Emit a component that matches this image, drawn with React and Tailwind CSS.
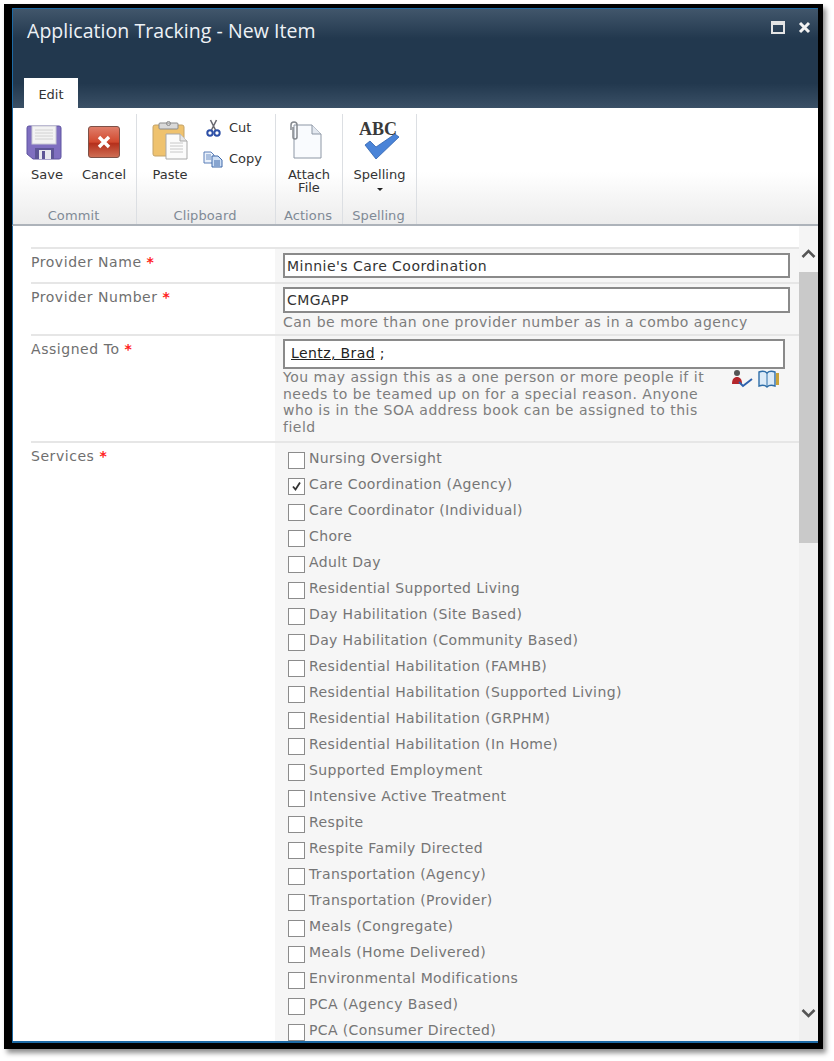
const services = [
  "Nursing Oversight",
  "Care Coordination (Agency)",
  "Care Coordinator (Individual)",
  "Chore",
  "Adult Day",
  "Residential Supported Living",
  "Day Habilitation (Site Based)",
  "Day Habilitation (Community Based)",
  "Residential Habilitation (FAMHB)",
  "Residential Habilitation (Supported Living)",
  "Residential Habilitation (GRPHM)",
  "Residential Habilitation (In Home)",
  "Supported Employment",
  "Intensive Active Treatment",
  "Respite",
  "Respite Family Directed",
  "Transportation (Agency)",
  "Transportation (Provider)",
  "Meals (Congregate)",
  "Meals (Home Delivered)",
  "Environmental Modifications",
  "PCA (Agency Based)",
  "PCA (Consumer Directed)",
];

function SaveIcon() {
  return (
    <svg width="36" height="36" viewBox="0 0 36 36" className="mr-[6px]">
      <path d="M1 3a2 2 0 0 1 2-2h30a2 2 0 0 1 2 2v29a2 2 0 0 1-2 2H7l-6-5z" fill="#7f6fc0" stroke="#5f54a0" />
      <rect x="6" y="1" width="24" height="18" fill="#f3f3f3" stroke="#c9c9d4" />
      <path d="M9 5h18M9 8h18M9 11h18M9 14h18" stroke="#d2d2d2" />
      <rect x="9" y="23" width="19" height="11" fill="#5d5596" />
      <rect x="13" y="25" width="12" height="9" fill="#e8e8ee" />
      <rect x="16" y="26" width="3" height="8" fill="#5d5596" />
    </svg>
  );
}

function CancelIcon() {
  return (
    <svg width="32" height="32" viewBox="0 0 32 32" className="mb-[3px]">
      <defs>
        <linearGradient id="cancelFill" x1="0" y1="0" x2="0" y2="1">
          <stop offset="0" stopColor="#e0806c" />
          <stop offset="0.5" stopColor="#d2492f" />
          <stop offset="0.55" stopColor="#b5301c" />
          <stop offset="1" stopColor="#cf6f55" />
        </linearGradient>
      </defs>
      <rect x="0.5" y="0.5" width="31" height="31" rx="2.5" fill="url(#cancelFill)" stroke="#7d5147" />
      <path d="M11 11l10 10M21 11L11 21" stroke="#fff" strokeWidth="3.4" />
    </svg>
  );
}

function PasteIcon() {
  return (
    <svg width="36" height="40" viewBox="0 0 36 40">
      <rect x="1" y="4" width="31" height="31" rx="2" fill="#efc26e" stroke="#c4a368" />
      <rect x="7" y="2" width="19" height="6" rx="1" fill="#d9d9d9" stroke="#8b8b8b" />
      <circle cx="16.5" cy="2.5" r="2" fill="none" stroke="#8b8b8b" />
      <path d="M14 13h14l7 7v18H14z" fill="#fbfbfb" stroke="#a9a9a9" />
      <path d="M28 13v7h7" fill="#e6e6e6" stroke="#a9a9a9" />
      <path d="M18 22h13M18 25h13M18 28h13M18 31h13" stroke="#c8c8c8" />
    </svg>
  );
}

function CutIcon() {
  return (
    <svg width="15" height="18" viewBox="0 0 15 18">
      <path d="M10.5 1L5.5 11M4.5 1l5 10" stroke="#6a6a72" strokeWidth="1.6" />
      <circle cx="4" cy="14" r="2.7" fill="none" stroke="#2d4fa6" strokeWidth="2" />
      <circle cx="11" cy="14" r="2.7" fill="none" stroke="#2d4fa6" strokeWidth="2" />
    </svg>
  );
}

function CopyIcon() {
  return (
    <svg width="20" height="17" viewBox="0 0 20 17">
      <path d="M1 1h7l3 3v8H1z" fill="#eaf1fb" stroke="#5a7fb8" />
      <path d="M3 4h5M3 6h5M3 8h5" stroke="#6c8fc4" />
      <path d="M9 5h6l4 4v7H9z" fill="#cfe0f6" stroke="#3f68a8" />
      <path d="M11 10h6M11 12h6M11 14h6" stroke="#3f68a8" />
    </svg>
  );
}

function AttachIcon() {
  return (
    <svg width="34" height="38" viewBox="0 0 34 38" className="mb-[2px] mr-[8px]">
      <path d="M6 4h18l9 9v24H6z" fill="#f9fbfe" stroke="#8d97a5" />
      <path d="M24 4v9h9" fill="#e3e8f0" stroke="#8d97a5" />
      <path d="M3 9V4a3 3 0 0 1 6 0v12a2 2 0 0 1-4 0V6" fill="none" stroke="#85898f" strokeWidth="1.5" />
    </svg>
  );
}

function SpellIcon() {
  return (
    <svg width="42" height="42" viewBox="0 -4 42 42" className="mb-[2px]">
      <text x="0" y="14" fontFamily="Liberation Serif" fontWeight="700" fontSize="18" fill="#3a3a3a">ABC</text>
      <path d="M6 24l5-4 6 6L36 13l4 3-23 22z" fill="#4a84d8" stroke="#2f62ad" strokeWidth="0.8" />
    </svg>
  );
}

function Group({ label, width, children }) {
  return (
    <div className={`${width} flex flex-col border-r border-[#dcdfe3]`}>
      <div className="flex flex-1">{children}</div>
      <div className="h-[17px] pr-[2px] text-center text-[13px] leading-[17px] tracking-[0.1px] text-[#7f8a96]">{label}</div>
    </div>
  );
}

function BigButton({ icon, label, width, arrow }) {
  return (
    <div className={`${width} flex flex-col items-center`}>
      <div className="flex h-[47px] items-end justify-center">{icon}</div>
      <div className="mt-[7px] text-center text-[13px] leading-[13px] text-[#333]">
        {label}
        {arrow && <div className="mx-auto mt-[7px] h-0 w-0 border-x-[3px] border-t-[3px] border-x-transparent border-t-[#222]" />}
      </div>
    </div>
  );
}

function Row({ label, children, className }) {
  return (
    <div className={`flex border-t-2 border-[#e6e6e6] ${className}`}>
      <div className="w-[244px] shrink-0 pt-[4px] text-[14px] leading-[18px] tracking-[0.55px] text-[#6f6f6f]">
        {label} <span className="font-bold text-[#ff2020]">*</span>
      </div>
      <div className="flex-1 bg-[#f6f6f6]">{children}</div>
    </div>
  );
}

export default function App() {
  return (
    <div className="h-[1061px] w-[834px] overflow-hidden bg-white pl-[4px] pt-[4px] font-['DejaVu_Sans',sans-serif]">
      <div className="flex h-[1045px] w-[819px] flex-col border-x-[8px] border-b-[6px] border-t-[4px] border-black border-r-[5px] shadow-[3px_4px_5px_rgba(0,0,0,0.45)]">
        <div className="flex h-[100px] shrink-0 flex-col border-l border-t border-[#1d6aa5] bg-[linear-gradient(#41566b,#22384e_30%,#22384e_75%,#3a5066)]">
          <div className="flex h-[69px] justify-between pl-[14px] pr-[7px] pt-[8px]">
            <div className="font-['Open_Sans',sans-serif] text-[19.5px] leading-[28px] tracking-[0.05px] text-[#eef2f6]">
              Application Tracking - New Item
            </div>
            <div className="flex gap-[13px] pt-[3px]">
              <div className="mt-[1px] h-[13px] w-[14px] border-2 border-t-[4px] border-[#e4e4e4]" />
              <svg width="13" height="13" viewBox="0 0 13 13" className="mt-[1px]">
                <path d="M2 2l9 9M11 2l-9 9" stroke="#f2f2f2" strokeWidth="3" />
              </svg>
            </div>
          </div>
          <div className="mt-auto flex h-[30px] pl-[11px]">
            <div className="w-[54px] bg-white pt-[8px] text-center text-[13px] leading-[17px] text-[#333]">Edit</div>
          </div>
        </div>

        <div className="flex h-[118px] shrink-0 border-b-2 border-l border-[#adb3ba] border-l-[#1d6aa5] bg-[linear-gradient(#ffffff_55%,#ececec)] pt-[6px]">
          <Group label="Commit" width="w-[124px]">
            <BigButton width="w-[68px]" label="Save" icon={<SaveIcon />} />
            <BigButton width="w-[46px]" label="Cancel" icon={<CancelIcon />} />
          </Group>
          <Group label="Clipboard" width="w-[139px]">
            <BigButton width="w-[66px]" label="Paste" icon={<PasteIcon />} />
            <div className="flex flex-col gap-[11px] pt-[4px] text-[13px] leading-[20px] text-[#333]">
              <div className="flex items-center gap-[8px] pl-[3px]"><CutIcon /> Cut</div>
              <div className="flex items-center gap-[6px]"><CopyIcon /> Copy</div>
            </div>
          </Group>
          <Group label="Actions" width="w-[67px]">
            <BigButton width="w-full" label={<>Attach<br />File</>} icon={<AttachIcon />} />
          </Group>
          <Group label="Spelling" width="w-[74px]">
            <BigButton width="w-full" label="Spelling" icon={<SpellIcon />} arrow />
          </Group>
        </div>

        <div className="flex min-h-0 flex-1 overflow-hidden border-b-2 border-l border-[#1d6aa5] bg-white">
          <div className="min-w-0 flex-1 pl-[18px] pt-[21px]">
            <Row label="Provider Name" className="h-[35px]">
              <div className="px-[8px] pt-[4px]">
                <div className="h-[25px] w-[507px] border-2 border-[#8a8a8a] bg-white pl-[2px] text-[14px] leading-[22px] tracking-[0.46px] text-[#333]">
                  Minnie's Care Coordination
                </div>
              </div>
            </Row>
            <Row label="Provider Number" className="h-[52px]">
              <div className="px-[8px] pt-[3px]">
                <div className="h-[26px] w-[507px] border-2 border-[#8a8a8a] bg-white pl-[2px] text-[14px] leading-[22px] tracking-[0.46px] text-[#333]">
                  CMGAPP
                </div>
                <div className="text-[14px] leading-[19px] tracking-[0.5px] text-[#7d7d7d]">
                  Can be more than one provider number as in a combo agency
                </div>
              </div>
            </Row>
            <Row label="Assigned To" className="h-[107px]">
              <div className="px-[8px] pt-[3px]">
                <div className="h-[30px] w-[502px] border-2 border-[#8a8a8a] bg-white pl-[6px] text-[14px] leading-[24px] tracking-[0.4px] text-[#222]">
                  <span className="underline">Lentz, Brad</span> ;
                </div>
                <div className="flex">
                  <div className="w-[447px] text-[14px] leading-[16.7px] tracking-[0.5px] text-[#7d7d7d]">
                    You may assign this as a one person or more people if it needs to be teamed up on for a special reason. Anyone who is in the SOA address book can be assigned to this field
                  </div>
                  <svg width="50" height="20" viewBox="0 0 50 20" className="ml-[1px]">
                    <circle cx="6" cy="4" r="3" fill="#555" />
                    <path d="M1 15c0-5 2-7 5-7s5 2 5 7z" fill="#b5262c" />
                    <path d="M8 13l4 4 9-7" fill="none" stroke="#2f62ad" strokeWidth="2" />
                    <path d="M28 3c3-1 6-1 8 1 2-2 5-2 8-1v14c-3-1-6-1-8 1-2-2-5-2-8-1z" fill="#dcebf8" stroke="#2f6ea8" strokeWidth="1.4" />
                    <path d="M36 4v14" stroke="#2f6ea8" />
                    <rect x="45" y="4" width="3" height="12" fill="#c9a33a" />
                  </svg>
                </div>
              </div>
            </Row>
            <Row label="Services" className="h-[700px]">
              <div className="pl-[13px] pt-[3px]">
                {services.map((name, i) => (
                  <div key={name} className="flex h-[26px] items-center gap-[4px] text-[14px] tracking-[0.38px] text-[#757575]">
                    <div className="mt-[2px] flex h-[17px] w-[17px] items-center justify-center border border-[#8c8c8c] bg-white">
                      {i === 1 && (
                        <svg width="11" height="11" viewBox="0 0 11 11">
                          <path d="M2 5.5l2.5 3L9 1.5" fill="none" stroke="#333" strokeWidth="1.8" />
                        </svg>
                      )}
                    </div>
                    <span className="-mt-[1px]">{name}</span>
                  </div>
                ))}
              </div>
            </Row>
          </div>
          <div className="flex w-[19px] shrink-0 flex-col bg-[#f0f0f0]">
            <div className="flex h-[46px] shrink-0 items-start justify-center bg-[#f5f5f5] pt-[22px]">
              <svg width="15" height="11" viewBox="0 0 15 11">
                <path d="M1.5 9L7.5 3l6 6" fill="none" stroke="#555" strokeWidth="2.6" />
              </svg>
            </div>
            <div className="h-[271px] shrink-0 bg-[#c9c9c9]" />
            <div className="flex flex-1 items-end justify-center pb-[22px]">
              <svg width="15" height="11" viewBox="0 0 15 11">
                <path d="M1.5 2l6 6 6-6" fill="none" stroke="#555" strokeWidth="2.6" />
              </svg>
            </div>
          </div>
        </div>
      </div>
    </div>
  );
}
